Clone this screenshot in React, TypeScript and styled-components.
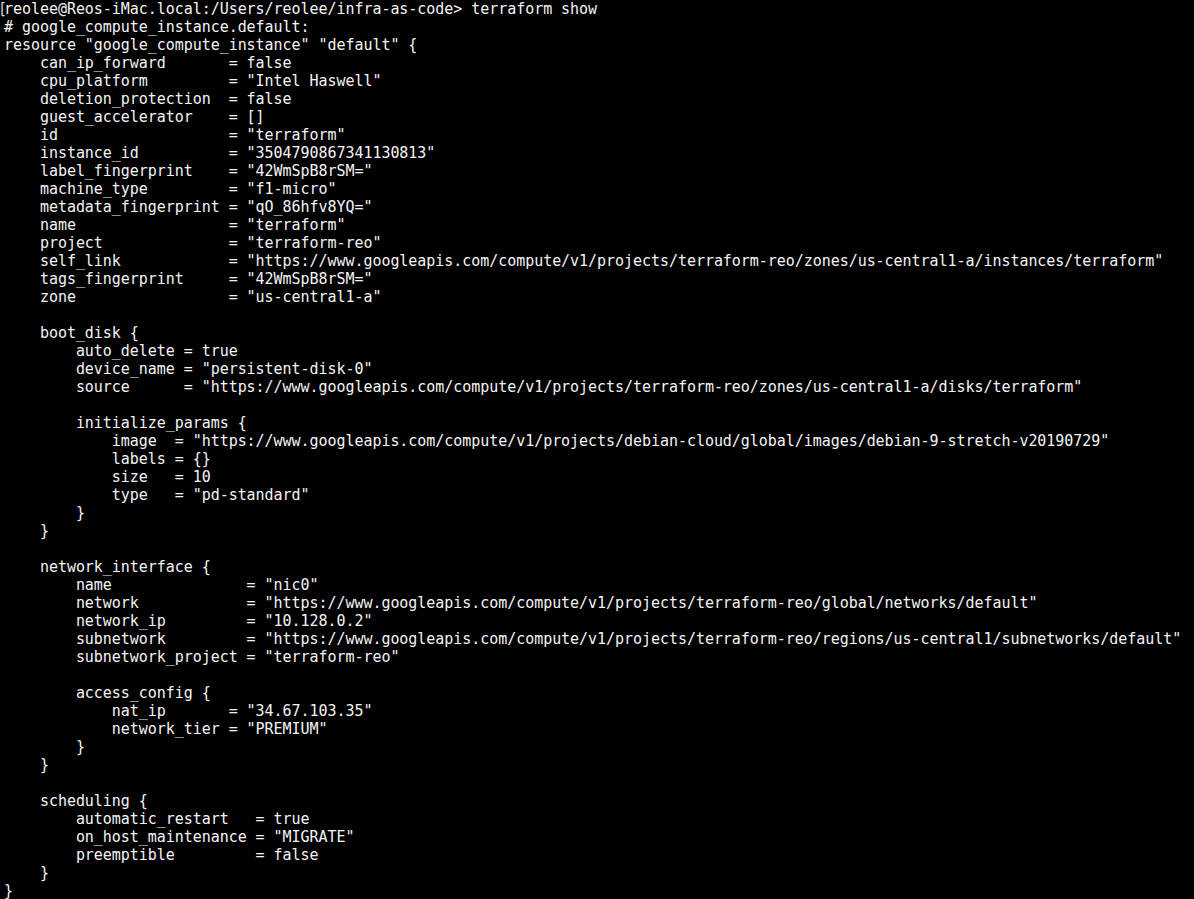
import React from "react";
import styled, { createGlobalStyle } from "styled-components";

const Global = createGlobalStyle`
  html, body { margin: 0; padding: 0; background: #000; }
  body { width: 1194px; height: 899px; overflow: hidden; }
`;

const Screen = styled.div`
  width: 1194px;
  height: 899px;
  background: #000;
  color: #f4f4f4;
  font-family: "DejaVu Sans Mono", "Liberation Mono", monospace;
  font-size: 15px;
  letter-spacing: -0.045px;
  line-height: 18px;
  padding-left: 4px;
  box-sizing: border-box;
  overflow: hidden;
`;

const Line = styled.div`
  height: 18px;
  white-space: pre;
`;

const Mark = styled.span`
  margin-left: -6px;
  margin-right: -3px;
  color: #cfcfcf;
`;

const lines: string[] = [
  `# google_compute_instance.default:`,
  `resource "google_compute_instance" "default" {`,
  `    can_ip_forward       = false`,
  `    cpu_platform         = "Intel Haswell"`,
  `    deletion_protection  = false`,
  `    guest_accelerator    = []`,
  `    id                   = "terraform"`,
  `    instance_id          = "3504790867341130813"`,
  `    label_fingerprint    = "42WmSpB8rSM="`,
  `    machine_type         = "f1-micro"`,
  `    metadata_fingerprint = "qO_86hfv8YQ="`,
  `    name                 = "terraform"`,
  `    project              = "terraform-reo"`,
  `    self_link            = "https://www.googleapis.com/compute/v1/projects/terraform-reo/zones/us-central1-a/instances/terraform"`,
  `    tags_fingerprint     = "42WmSpB8rSM="`,
  `    zone                 = "us-central1-a"`,
  ``,
  `    boot_disk {`,
  `        auto_delete = true`,
  `        device_name = "persistent-disk-0"`,
  `        source      = "https://www.googleapis.com/compute/v1/projects/terraform-reo/zones/us-central1-a/disks/terraform"`,
  ``,
  `        initialize_params {`,
  `            image  = "https://www.googleapis.com/compute/v1/projects/debian-cloud/global/images/debian-9-stretch-v20190729"`,
  `            labels = {}`,
  `            size   = 10`,
  `            type   = "pd-standard"`,
  `        }`,
  `    }`,
  ``,
  `    network_interface {`,
  `        name               = "nic0"`,
  `        network            = "https://www.googleapis.com/compute/v1/projects/terraform-reo/global/networks/default"`,
  `        network_ip         = "10.128.0.2"`,
  `        subnetwork         = "https://www.googleapis.com/compute/v1/projects/terraform-reo/regions/us-central1/subnetworks/default"`,
  `        subnetwork_project = "terraform-reo"`,
  ``,
  `        access_config {`,
  `            nat_ip       = "34.67.103.35"`,
  `            network_tier = "PREMIUM"`,
  `        }`,
  `    }`,
  ``,
  `    scheduling {`,
  `        automatic_restart   = true`,
  `        on_host_maintenance = "MIGRATE"`,
  `        preemptible         = false`,
  `    }`,
  `}`,
];

export default function App() {
  return (
    <>
      <Global />
      <Screen>
        <Line>
          <Mark>[</Mark>reolee@Reos-iMac.local:/Users/reolee/infra-as-code&gt; terraform show
        </Line>
        {lines.map((l, i) => (
          <Line key={i}>{l}</Line>
        ))}
      </Screen>
    </>
  );
}
